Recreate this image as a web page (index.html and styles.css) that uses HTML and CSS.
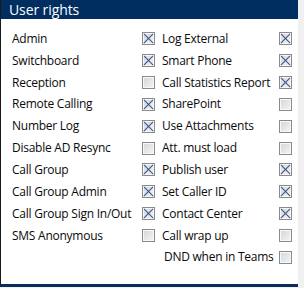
FILE: index.html
```html
<!DOCTYPE html>
<html>
<head>
<meta charset="utf-8">
<link rel="stylesheet" href="styles.css">
</head>
<body>
<div class="panel">
  <div class="header">User rights</div>
  <div class="grid">
    <span class="lbl">Admin</span><span class="cb on"></span>
    <span class="lbl r">Log External</span><span class="cb on"></span>

    <span class="lbl">Switchboard</span><span class="cb on"></span>
    <span class="lbl r">Smart Phone</span><span class="cb on"></span>

    <span class="lbl">Reception</span><span class="cb"></span>
    <span class="lbl r">Call Statistics Report</span><span class="cb on"></span>

    <span class="lbl">Remote Calling</span><span class="cb on"></span>
    <span class="lbl r">SharePoint</span><span class="cb"></span>

    <span class="lbl">Number Log</span><span class="cb on"></span>
    <span class="lbl r">Use Attachments</span><span class="cb"></span>

    <span class="lbl">Disable AD Resync</span><span class="cb"></span>
    <span class="lbl r">Att. must load</span><span class="cb"></span>

    <span class="lbl">Call Group</span><span class="cb on"></span>
    <span class="lbl r">Publish user</span><span class="cb on"></span>

    <span class="lbl">Call Group Admin</span><span class="cb on"></span>
    <span class="lbl r">Set Caller ID</span><span class="cb on"></span>

    <span class="lbl">Call Group Sign In/Out</span><span class="cb on"></span>
    <span class="lbl r">Contact Center</span><span class="cb on"></span>

    <span class="lbl">SMS Anonymous</span><span class="cb"></span>
    <span class="lbl r">Call wrap up</span><span class="cb"></span>

    <span class="lbl"></span><span></span>
    <span class="lbl r ind">DND when in Teams</span><span class="cb"></span>
  </div>
</div>
</body>
</html>
```
FILE: styles.css
```css
html, body {
  margin: 0;
  padding: 0;
  background: #f0f0f0;
  height: 288px;
  overflow: hidden;
}
body {
  font-family: "Open Sans", "Noto Sans", sans-serif;
  font-size: 12px;
  color: #0a0a0a;
}
.panel {
  width: 297px;
  height: 284px;
  background: #fff;
  border-left: 1px solid #1a1a1a;
  border-bottom: 3px solid #0b2d5c;
  display: flex;
  flex-direction: column;
}
.header {
  height: 19px;
  line-height: 19px;
  background: #002e61;
  color: #fff;
  font-size: 14px;
  letter-spacing: -0.1px;
  padding-left: 8px;
}
.grid {
  display: grid;
  grid-template-columns: 130px 13px 124px 13px;
  grid-auto-rows: 21.85px;
  padding: 9px 0 0 11px;
  align-items: center;
}
.lbl {
  white-space: nowrap;
  line-height: 16px;
  letter-spacing: -0.25px;
}
.lbl.r { padding-left: 7px; }
.lbl.r.ind { padding-left: 9px; }
.cb {
  width: 11px;
  height: 11px;
  border: 1px solid #8a8a8a;
  background: linear-gradient(135deg, #d4d6d9 0%, #f4f4f5 100%);
  box-shadow: inset 0 0 0 1px #f8f8f8;
  position: relative;
  overflow: hidden;
}
.cb.on::before, .cb.on::after {
  content: "";
  position: absolute;
  left: -1px;
  top: 5px;
  width: 13px;
  height: 1.2px;
  background: #34508e;
}
.cb.on::before { transform: rotate(45deg); }
.cb.on::after { transform: rotate(-45deg); }
```
